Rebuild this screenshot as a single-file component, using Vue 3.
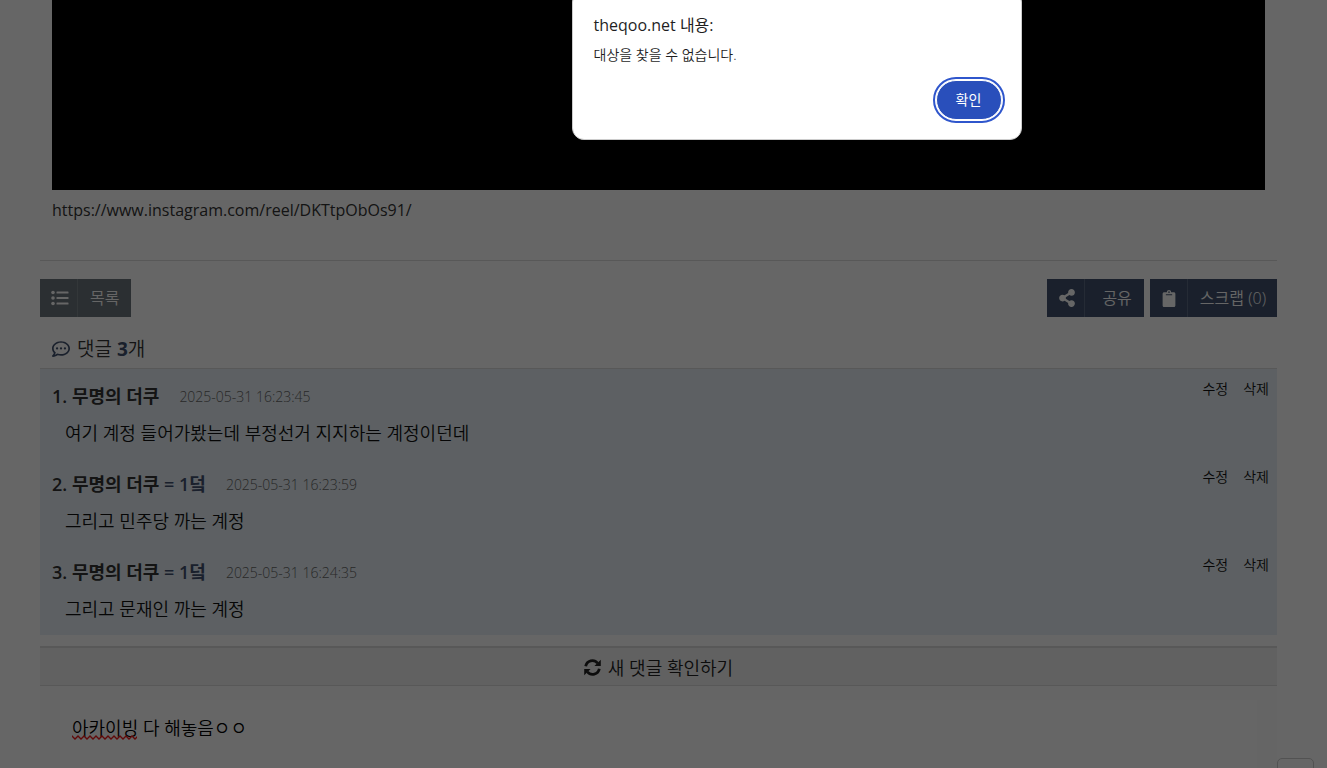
<script setup>
import { ref } from 'vue'

const comments = [
  { id: 1, author: '무명의 더쿠', same: '', date: '2025-05-31 16:23:45', text: '여기 계정 들어가봤는데 부정선거 지지하는 계정이던데' },
  { id: 2, author: '무명의 더쿠', same: '= 1덬', date: '2025-05-31 16:23:59', text: '그리고 민주당 까는 계정' },
  { id: 3, author: '무명의 더쿠', same: '= 1덬', date: '2025-05-31 16:24:35', text: '그리고 문재인 까는 계정' }
]
const draft = ref('아카이빙 다 해놓음ㅇㅇ')
</script>

<template>
  <div class="page">
    <main class="content">
      <div class="media"></div>
      <p class="source">https://www.instagram.com/reel/DKTtpObOs91/</p>
      <nav class="toolbar">
        <button class="btn gray" type="button">
          <span class="ico">
            <svg width="18" height="16" viewBox="0 0 18 16" fill="currentColor">
              <circle cx="2" cy="2.5" r="1.8" /><circle cx="2" cy="8" r="1.8" /><circle cx="2" cy="13.5" r="1.8" />
              <rect x="5.5" y="1.5" width="12" height="2" rx=".5" /><rect x="5.5" y="7" width="12" height="2" rx=".5" /><rect x="5.5" y="12.5" width="12" height="2" rx=".5" />
            </svg>
          </span>
          <span class="label">목록</span>
        </button>
        <span class="right">
          <button class="btn navy" type="button">
            <span class="ico">
              <svg width="16" height="18" viewBox="0 0 448 512" fill="currentColor"><path d="M352 320c-22.600 0-43.400 7.800-59.800 20.900l-102.500-64.100a96.600 96.600 0 0 0 0-41.600l102.500-64.100C308.600 184.200 329.400 192 352 192c53 0 96-43 96-96S405 0 352 0s-96 43-96 96c0 7.200.8 14.100 2.300 20.800l-102.500 64.100C139.400 167.800 118.600 160 96 160c-53 0-96 43-96 96s43 96 96 96c22.600 0 43.400-7.800 59.800-20.900l102.500 64.100A96 96 0 1 0 352 320z" /></svg>
            </span>
            <span class="label share">공유</span>
          </button>
          <button class="btn navy" type="button">
            <span class="ico">
              <svg width="14" height="17" viewBox="0 0 384 512" fill="currentColor"><path fill-rule="evenodd" d="M384 112v352c0 26.500-21.500 48-48 48H48c-26.500 0-48-21.500-48-48V112c0-26.500 21.500-48 48-48h80c0-35.300 28.700-64 64-64s64 28.700 64 64h80c26.500 0 48 21.500 48 48zM192 40a24 24 0 1 0 0 48 24 24 0 0 0 0-48zm96 114v-20a6 6 0 0 0-6-6H102a6 6 0 0 0-6 6v20a6 6 0 0 0 6 6h180a6 6 0 0 0 6-6z" /></svg>
            </span>
            <span class="label scrap">스크랩 (0)</span>
          </button>
        </span>
      </nav>

      <h2 class="count">
        <svg class="bubble" width="18" height="18" viewBox="0 0 512 512" fill="currentColor"><path d="M144 208a32 32 0 1 0 0 64 32 32 0 0 0 0-64zm112 0a32 32 0 1 0 0 64 32 32 0 0 0 0-64zm112 0a32 32 0 1 0 0 64 32 32 0 0 0 0-64zM256 32C114.600 32 0 125.100 0 240c0 47.600 19.900 91.200 52.900 126.300C38 405.700 7 439.100 6.500 439.500A24 24 0 0 0 24 480c61.500 0 110-25.700 139.100-46.300C192 442.800 223.200 448 256 448c141.400 0 256-93.100 256-208S397.400 32 256 32zm0 368c-26.700 0-53.100-4.100-78.400-12.100l-22.700-7.200-19.500 13.800c-14.300 10.100-33.900 21.400-57.500 29 7.300-12.100 14.400-25.700 19.900-40.200l10.600-28.100-20.600-21.800C69.700 314.100 48 282.200 48 240c0-88.200 93.300-160 208-160s208 71.800 208 160-93.300 160-208 160z" /></svg>
        <span>댓글 <b>3</b>개</span>
      </h2>

      <ul class="comments">
        <li v-for="c in comments" :key="c.id">
          <div class="meta">
            <strong>{{ c.id }}. {{ c.author }} <em v-if="c.same">{{ c.same }}</em></strong>
            <time>{{ c.date }}</time>
            <span class="actions"><a href="#">수정</a><a href="#">삭제</a></span>
          </div>
          <p>{{ c.text }}</p>
        </li>
      </ul>

      <button class="refresh" type="button">
        <svg width="17" height="17" viewBox="0 0 16 16"><g fill="none" stroke="currentColor" stroke-width="2.600"><path d="M1.600 6.800A6.300 6.300 0 0 1 12.800 4" /><path d="M14.400 9.200A6.300 6.300 0 0 1 3.200 12" /></g><path fill="currentColor" d="M15.800.7v6h-6zM.2 15.300v-6h6z" /></svg>
        <span>새 댓글 확인하기</span>
      </button>

      <form class="editor" @submit.prevent>
        <textarea v-model="draft" aria-label="댓글 내용" spellcheck="false"></textarea>
        <svg class="wave" width="65" height="5"><defs><pattern id="wave" width="6" height="5" patternUnits="userSpaceOnUse"><path d="M-1 0L0 1L3 4L6 1L7 0" fill="none" stroke="#f01818" stroke-width="1.300" /></pattern></defs><rect width="65" height="5" fill="url(#wave)" /></svg>
      </form>
    </main>
    <button class="top" type="button" aria-label="위로"></button>
    <div class="shade"></div>
    <section class="dialog" role="alertdialog" aria-labelledby="title" aria-describedby="message">
      <h1 id="title">theqoo.net 내용:</h1>
      <p id="message">대상을 찾을 수 없습니다.</p>
      <button class="ok" type="button">확인</button>
    </section>
  </div>
</template>

<style>
body { margin: 0; overflow: hidden; }
</style>

<style scoped>
* { box-sizing: border-box; }
.page {
  position: relative;
  height: 100vh;
  overflow: hidden;
  background: #fff;
  color: #333;
  font: 16px/24px "Open Sans", "Noto Sans CJK KR", sans-serif;
}
button { font: inherit; }
.content { margin: 0 50px 0 40px; }
.media { height: 190px; margin: 0 12px; background: #000; }
.source { margin: 0; padding: 8px 12px 38px; border-bottom: 1px solid #ddd; }
.toolbar { display: flex; justify-content: space-between; padding-top: 18px; }
.right { display: flex; gap: 6px; }
.btn { display: flex; height: 38px; padding: 0; border: 0; color: #fff; align-items: stretch; }
.gray { background: #6c757d; }
.navy { background: #41526f; }
.ico { display: flex; width: 38px; align-items: center; justify-content: center; border-right: 1px solid rgba(255, 255, 255, .15); }
.ico svg { margin-left: 2px; }
.label { padding: 7px 12px; font-weight: 350; }
.share { padding-left: 17px; }
.scrap { padding-right: 11px; }
.count { display: flex; align-items: center; gap: 7px; height: 51px; margin: 0; padding: 12px 12px 0; font-size: 19px; font-weight: 350; }
.count b { font-weight: 700; }
.count b, .bubble { color: #41526f; }
.comments { margin: 0; padding: 0 0 2px; list-style: none; background: #e8f1f7; border-top: 1px solid #ddd; }
.comments li { height: 88px; padding: 15px 8px 0 12px; }
.meta { display: flex; height: 24px; }
strong { color: #333; font-size: 18px; font-weight: 600; }
em { font-style: normal; color: #41526f; }
time { margin-left: 20px; padding-top: 1px; font-size: 14px; font-weight: 350; color: #666; }
.actions { display: flex; gap: 15px; margin: -7px 0 0 auto; font-size: 14px; font-weight: 350; }
.actions a { color: #111; text-decoration: none; }
.comments p { margin: 13px 0 0 13px; font-size: 18px; font-weight: 350; color: #111; }
.refresh { display: flex; width: 100%; height: 40px; margin-top: 11px; padding: 2px 0 0; align-items: center; justify-content: center; gap: 7px; border: 0; border-top: 2px solid #ddd; border-bottom: 1px solid #ddd; background: #f3f3f3; color: #222; font-size: 18px; font-weight: 350; }
.editor { position: relative; padding: 14px 20px; background: #fdfdfd; }
.editor textarea { display: block; width: 100%; height: 120px; padding: 16px 12px; border: 0; outline: 0; resize: none; background: #fff; color: #000; font: inherit; font-size: 18px; font-weight: 350; }
.wave { position: absolute; left: 32px; top: 49px; }
.top { position: absolute; right: 13px; bottom: -26px; width: 37px; height: 36px; border: 1px solid #ccc; border-radius: 5px; background: #fff; }
.shade { position: absolute; inset: 0; background: rgba(0, 0, 0, .6); }
.dialog { position: absolute; top: -10px; left: calc(50% + 133px); width: 450px; height: 150px; padding: 22px 17px 17px 21px; transform: translateX(-50%); border: 1px solid #ccc; border-radius: 12px; background: #fff; color: #1f1f1f; }
.dialog h1 { margin: 0; font-size: 16px; font-weight: 400; line-height: 24px; }
.dialog p { margin: 8px 0 15px; font-size: 14px; font-weight: 350; line-height: 20px; }
.ok { display: block; width: 66px; height: 40px; margin: 0 2px 0 auto; padding: 0; border: 1px solid #fff; border-radius: 20px; outline: 2px solid #2f56cc; outline-offset: 1px; background: #294fbb; color: #fff; font-size: 14px; }
</style>
